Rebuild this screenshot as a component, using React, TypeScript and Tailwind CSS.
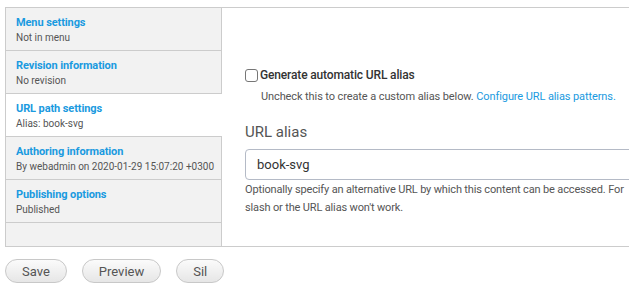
import React from 'react'

const TABS = [
  { title: 'Menu settings', summary: 'Not in menu' },
  { title: 'Revision information', summary: 'No revision' },
  { title: 'URL path settings', summary: 'Alias: book-svg', selected: true },
  { title: 'Authoring information', summary: 'By webadmin on 2020-01-29 15:07:20 +0300' },
  { title: 'Publishing options', summary: 'Published' },
]

const BUTTONS = ['Save', 'Preview', 'Sil']

export default function App() {
  return (
    <div
      className="w-[629px] h-[293px] overflow-hidden bg-white text-[#333]"
      style={{ fontFamily: 'Roboto, "Liberation Sans", sans-serif' }}
    >
      <div className="pl-[5px] pt-[7px]">
        {/* Vertical tabs panel */}
        <div className="flex w-[700px] h-[240px] border-y border-l border-[#cccccc]">
          <ul className="w-[216px] shrink-0 bg-[#f2f2f2] border-r border-[#cccccc]">
            {TABS.map(({ title, summary, selected }) => (
              <li
                key={title}
                className={
                  selected
                    ? 'relative -mr-px h-[43px] bg-white border-b border-[#cccccc] pl-[10px] pt-[8px]'
                    : 'h-[43px] border-b border-[#cccccc] pl-[10px] pt-[8px]'
                }
              >
                <div className="text-[11px] leading-[14px] font-bold tracking-[-0.1px] text-[#1a9ae0]">{title}</div>
                <div className="text-[10px] leading-[14px] text-[#555] mt-[1px]">{summary}</div>
              </li>
            ))}
          </ul>

          {/* Pane */}
          <div className="flex-1 pl-[23px] pt-[60px]">
            <label className="flex items-center gap-[1px]">
              <span className="w-[13px] h-[13px] rounded-[3px] border border-[#767676] bg-white mr-[1px]" />
              <span className="text-[12px] font-medium tracking-[-0.15px] text-[#333] leading-[14px]">
                Generate automatic URL alias
              </span>
            </label>
            <p className="mt-[8px] ml-[16px] text-[11px] tracking-[-0.1px] leading-[14px] text-[#555]">
              Uncheck this to create a custom alias below.{' '}
              <a className="text-[#1a9ae0]">Configure URL alias patterns.</a>
            </p>

            <div className="mt-[19px] text-[15px] leading-[18px] text-[#555]">URL alias</div>
            <div className="mt-[8px] h-[31px] w-[420px] rounded-[4px] border border-[#b4bac6] flex items-center pl-[11px] text-[13px] text-[#333]">
              book-svg
            </div>
            <p className="mt-[1px] text-[11px] tracking-[-0.15px] leading-[18px] text-[#555] whitespace-nowrap">
              Optionally specify an alternative URL by which this content can be accessed. For
              <br />
              slash or the URL alias won't work.
            </p>
          </div>
        </div>

        {/* Actions */}
        <div className="flex gap-[15px] mt-[12px]">
          {BUTTONS.map((label) => (
            <button
              key={label}
              className="h-[24px] px-4 rounded-full border border-[#c8c8c8] bg-gradient-to-b from-[#fbfbfb] to-[#e6e6e6] text-[13px] text-[#555] leading-none"
            >
              {label}
            </button>
          ))}
        </div>
      </div>
    </div>
  )
}
